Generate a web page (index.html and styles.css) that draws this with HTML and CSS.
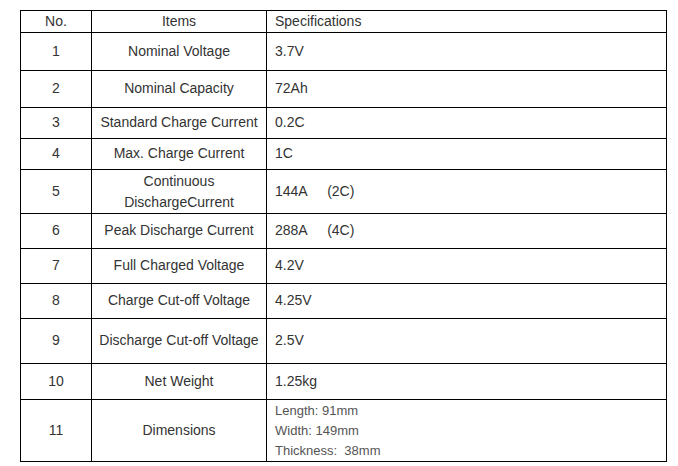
FILE: index.html
```html
<!DOCTYPE html>
<html>
<head>
<meta charset="utf-8">
<link rel="stylesheet" href="styles.css">
</head>
<body>
<div class="wrap">
<table class="spec">
  <colgroup>
    <col class="c-no">
    <col class="c-item">
    <col class="c-spec">
  </colgroup>
  <tr class="h22"><td class="ctr">No.</td><td class="ctr">Items</td><td>Specifications</td></tr>
  <tr class="h38"><td class="ctr">1</td><td class="ctr">Nominal Voltage</td><td>3.7V</td></tr>
  <tr class="h37"><td class="ctr">2</td><td class="ctr">Nominal Capacity</td><td>72Ah</td></tr>
  <tr class="h31"><td class="ctr">3</td><td class="ctr">Standard Charge Current</td><td>0.2C</td></tr>
  <tr class="h31"><td class="ctr">4</td><td class="ctr">Max. Charge Current</td><td>1C</td></tr>
  <tr class="h44"><td class="ctr">5</td><td class="ctr two">Continuous<br>DischargeCurrent</td><td>144A&nbsp;&nbsp;&nbsp;&nbsp;&nbsp;(2C)</td></tr>
  <tr class="h35"><td class="ctr">6</td><td class="ctr">Peak Discharge Current</td><td>288A&nbsp;&nbsp;&nbsp;&nbsp;&nbsp;(4C)</td></tr>
  <tr class="h35"><td class="ctr">7</td><td class="ctr">Full Charged Voltage</td><td>4.2V</td></tr>
  <tr class="h35"><td class="ctr">8</td><td class="ctr">Charge Cut-off Voltage</td><td>4.25V</td></tr>
  <tr class="h45"><td class="ctr">9</td><td class="ctr">Discharge Cut-off Voltage</td><td>2.5V</td></tr>
  <tr class="h36"><td class="ctr">10</td><td class="ctr">Net Weight</td><td>1.25kg</td></tr>
  <tr class="h62"><td class="ctr">11</td><td class="ctr">Dimensions</td><td class="dims">Length: 91mm<br>Width: 149mm<br>Thickness:&nbsp;&nbsp;38mm</td></tr>
</table>
</div>
</body>
</html>
```
FILE: styles.css
```css
html, body {
  margin: 0;
  padding: 0;
  background: #fff;
}
.wrap {
  padding: 10px 0 0 20px;
}
.spec {
  border-collapse: collapse;
  table-layout: fixed;
  width: 646px;
  font-family: "Liberation Sans", Arial, sans-serif;
  font-size: 14px;
  color: #333;
}
.c-no { width: 71px; }
.c-item { width: 175px; }
.c-spec { width: 400px; }
.spec td {
  border: 1px solid #000;
  padding: 0 0 2px 8px;
  vertical-align: middle;
  line-height: 16px;
}
.spec td.ctr {
  text-align: center;
  padding: 0 0 2px 0;
}
.spec td.two {
  line-height: 21px;
  padding-bottom: 0;
}
.spec td.dims {
  line-height: 20px;
  font-size: 13px;
  color: #555;
  padding-bottom: 0;
}
.h22 { height: 22px; }
.h31 { height: 31px; }
.h35 { height: 35px; }
.h36 { height: 36px; }
.h37 { height: 37px; }
.h38 { height: 38px; }
.h44 { height: 44px; }
.h45 { height: 45px; }
.h62 { height: 62px; }
```
